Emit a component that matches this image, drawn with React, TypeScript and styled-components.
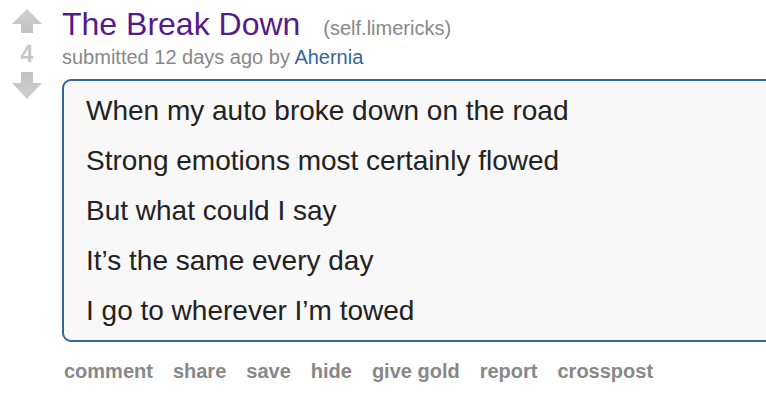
import React from "react";
import styled, { createGlobalStyle } from "styled-components";

const Global = createGlobalStyle`
  html, body { margin: 0; padding: 0; background: #fff; overflow: hidden; }
  body { font-family: "Liberation Sans", Arial, Helvetica, sans-serif; }
`;

const Thing = styled.div`
  display: flex;
  align-items: flex-start;
  width: 900px;
  padding: 9px 0 0 12px;
`;

const Midcol = styled.div`
  display: flex;
  flex-direction: column;
  align-items: center;
  width: 30px;
  flex: none;
`;

const Score = styled.div`
  font-size: 23px;
  font-weight: bold;
  color: #c6c6c6;
  line-height: 24px;
  margin: 9px 0 6px;
`;

const Entry = styled.div`
  display: flex;
  flex-direction: column;
  margin-left: 20px;
  flex: 1;
`;

const TitleRow = styled.div`
  display: flex;
  align-items: baseline;
  line-height: 30px;
`;

const Title = styled.a`
  font-size: 32px;
  color: #551a8b;
  text-decoration: none;
`;

const Domain = styled.span`
  font-size: 20px;
  color: #888;
  margin-left: 23px;
`;

const Tagline = styled.div`
  font-size: 20px;
  color: #888;
  line-height: 24px;
  margin-top: 2px;
`;

const Author = styled.a`
  color: #369;
  text-decoration: none;
`;

const Usertext = styled.div`
  margin-top: 10px;
  border: 2px solid #369;
  border-radius: 9px;
  background: #f8f8f8;
  padding: 14px 22px 13px;
  display: flex;
  flex-direction: column;
  gap: 18px;
`;

const Line = styled.p`
  margin: 0;
  font-size: 28px;
  line-height: 32px;
  color: #222;
`;

const Buttons = styled.ul`
  list-style: none;
  margin: 17px 0 0 2px;
  padding: 0;
  display: flex;
  gap: 20px;
`;

const Button = styled.li`
  font-size: 20px;
  font-weight: bold;
  color: #888;
  line-height: 24px;
`;

const UpArrow = () => (
  <svg width="30" height="24" viewBox="0 0 30 24">
    <defs>
      <linearGradient id="gu" x1="0" y1="0" x2="0" y2="1">
        <stop offset="0" stopColor="#cfcfcf" />
        <stop offset="1" stopColor="#c2c2c2" />
      </linearGradient>
    </defs>
    <path d="M15 0 L30 15 L21 15 L21 24 L9 24 L9 15 L0 15 Z" fill="url(#gu)" />
  </svg>
);

const DownArrow = () => (
  <svg width="30" height="27" viewBox="0 0 30 27">
    <defs>
      <linearGradient id="gd" x1="0" y1="0" x2="0" y2="1">
        <stop offset="0" stopColor="#c2c2c2" />
        <stop offset="1" stopColor="#cfcfcf" />
      </linearGradient>
    </defs>
    <path d="M9 0 L21 0 L21 11 L30 11 L15 27 L0 11 L9 11 Z" fill="url(#gd)" />
  </svg>
);

const lines = [
  "When my auto broke down on the road",
  "Strong emotions most certainly flowed",
  "But what could I say",
  "It\u2019s the same every day",
  "I go to wherever I\u2019m towed",
];

const actions = ["comment", "share", "save", "hide", "give gold", "report", "crosspost"];

export default function App() {
  return (
    <>
      <Global />
      <Thing>
        <Midcol>
          <UpArrow />
          <Score>4</Score>
          <DownArrow />
        </Midcol>
        <Entry>
          <TitleRow>
            <Title href="#">The Break Down</Title>
            <Domain>(self.limericks)</Domain>
          </TitleRow>
          <Tagline>
            submitted 12 days ago by <Author href="#">Ahernia</Author>
          </Tagline>
          <Usertext>
            {lines.map((l) => (
              <Line key={l}>{l}</Line>
            ))}
          </Usertext>
          <Buttons>
            {actions.map((a) => (
              <Button key={a}>{a}</Button>
            ))}
          </Buttons>
        </Entry>
      </Thing>
    </>
  );
}
